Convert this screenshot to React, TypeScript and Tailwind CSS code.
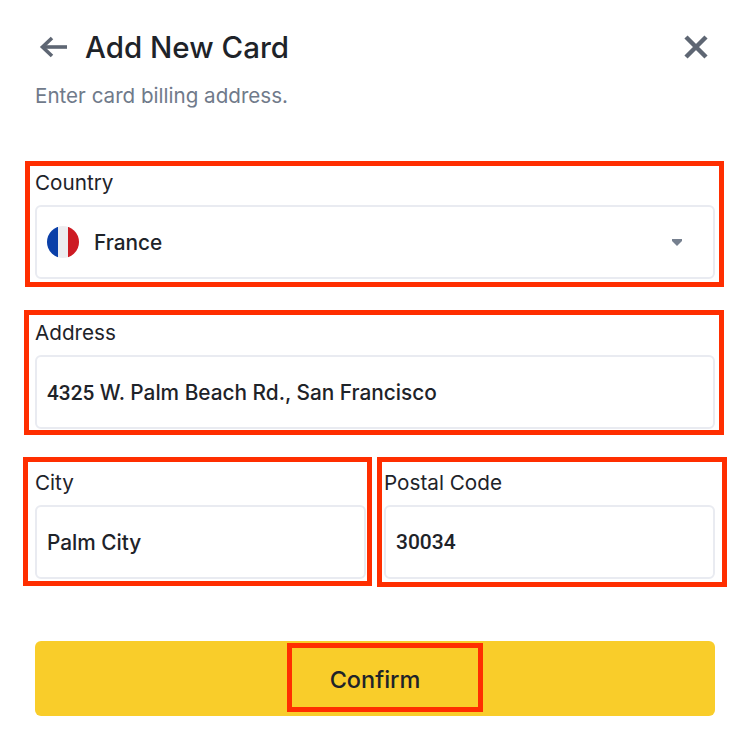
import React from "react";

function Marker({ className }: { className: string }) {
  return <div className={`absolute border-[5px] border-[#ff2e00] pointer-events-none ${className}`} />;
}

function Field({ label, children, marker, className = "" }: { label: string; children: React.ReactNode; marker: string; className?: string }) {
  return (
    <div className={`relative ${className}`}>
      <Marker className={marker} />
      <div className="h-[30px] leading-[30px] text-[20.7px] text-[#1e2329]">{label}</div>
      <div className="mt-[7px] h-[74px] rounded-[6px] border-2 border-[#e9ebf1] bg-white flex items-center pt-[2px] px-[10px] text-[20.8px] font-medium text-[#1e2329]">
        {children}
      </div>
    </div>
  );
}

export default function App() {
  return (
    <div className="w-[742px] h-[746px] bg-white pl-[35px] pr-[27px] overflow-hidden font-['Inter','Liberation_Sans',sans-serif]">
      <div className="h-[95px] pt-[25px] relative">
        <div className="flex items-center justify-between h-[44px]">
          <div className="flex items-center">
            <svg width="30" height="22" viewBox="0 0 30 22" className="ml-[3px]" fill="none" stroke="#5e6673" strokeWidth="3.6">
              <path d="M29 11H4" />
              <path d="M14 2 L4.5 11 L14 20" />
            </svg>
            <h1 className="ml-[17px] text-[29.5px] font-medium leading-[44px] text-[#1e2329]">Add New Card</h1>
          </div>
          <svg width="24" height="24" viewBox="0 0 24 24" className="mr-[7px]" fill="none" stroke="#5e6673" strokeWidth="4.5">
            <path d="M2 2 L22 22 M22 2 L2 22" />
          </svg>
        </div>
      </div>
      <p className="text-[20.6px] leading-[30px] -mt-[15px] pt-px text-[#707a8a]">Enter card billing address.</p>
      <div className="mt-[57px] flex flex-col gap-[39px]">
        <Field label="Country" marker="-left-[10px] -top-[7px] -right-[9px] -bottom-[8px]">
          <svg width="32" height="32" viewBox="0 0 32 32" className="shrink-0 -mt-[2px]">
            <defs>
              <clipPath id="flag">
                <circle cx="16" cy="16" r="16" />
              </clipPath>
            </defs>
            <g clipPath="url(#flag)">
              <rect x="0" y="0" width="11" height="32" fill="#0a3fa8" />
              <rect x="11" y="0" width="10" height="32" fill="#ecedf0" />
              <rect x="21" y="0" width="11" height="32" fill="#cd1b23" />
            </g>
          </svg>
          <span className="ml-[15px]">France</span>
          <svg width="12" height="9" viewBox="0 0 12 9" className="ml-auto mr-[20px] -mt-[2px]">
            <path d="M1 1 H11 V3 L6 8 L1 3 Z" fill="#76808f" />
          </svg>
        </Field>
        <Field label="Address" marker="-left-[11px] -top-[8px] -right-[9px] -bottom-[6px]">
          <span>
            <span className="font-['Roboto',sans-serif]">4325</span> W. Palm Beach Rd., San Francisco
          </span>
        </Field>
        <div className="flex">
          <Field label="City" className="w-[331px]" marker="-left-[12px] -top-[11px] -right-[6px] -bottom-[7px]">
            Palm City
          </Field>
          <Field label="Postal Code" className="ml-[18px] w-[331px]" marker="-left-[7px] -top-[11px] -right-[12px] -bottom-[8px]">
            <span className="font-['Roboto',sans-serif] text-[21px]">30034</span>
          </Field>
        </div>
      </div>
      <div className="relative mt-[62px] h-[75px] rounded-[6px] bg-[#f9cd2a] flex items-center justify-center text-[23.5px] pt-[2px] font-medium text-[#1e2329]">
        <Marker className="left-[252px] top-[2px] right-[232px] bottom-[4px]" />
        Confirm
      </div>
    </div>
  );
}
